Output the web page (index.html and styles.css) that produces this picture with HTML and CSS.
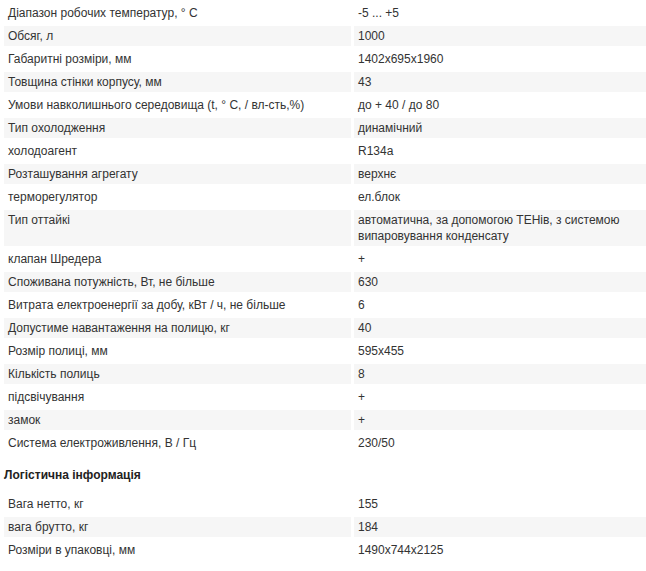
FILE: index.html
```html
<!DOCTYPE html>
<html lang="uk">
<head>
<meta charset="utf-8">
<link rel="stylesheet" href="styles.css">
</head>
<body>
<div class="specs">
<table class="spec-table">
<colgroup><col class="c-name"><col class="c-val"></colgroup>
<tbody>
<tr><td>Діапазон робочих температур, ° C</td><td>-5 ... +5</td></tr>
<tr><td>Обсяг, л</td><td>1000</td></tr>
<tr><td>Габаритні розміри, мм</td><td>1402x695x1960</td></tr>
<tr><td>Товщина стінки корпусу, мм</td><td>43</td></tr>
<tr><td>Умови навколишнього середовища (t, ° C, / вл-сть,%)</td><td>до + 40 / до 80</td></tr>
<tr><td>Тип охолодження</td><td>динамічний</td></tr>
<tr><td>холодоагент</td><td>R134a</td></tr>
<tr><td>Розташування агрегату</td><td>верхнє</td></tr>
<tr><td>терморегулятор</td><td>ел.блок</td></tr>
<tr><td>Тип оттайкі</td><td>автоматична, за допомогою ТЕНів, з системою випаровування конденсату</td></tr>
<tr><td>клапан Шредера</td><td>+</td></tr>
<tr><td>Споживана потужність, Вт, не більше</td><td>630</td></tr>
<tr><td>Витрата електроенергії за добу, кВт / ч, не більше</td><td>6</td></tr>
<tr><td>Допустиме навантаження на полицю, кг</td><td>40</td></tr>
<tr><td>Розмір полиці, мм</td><td>595x455</td></tr>
<tr><td>Кількість полиць</td><td>8</td></tr>
<tr><td>підсвічування</td><td>+</td></tr>
<tr><td>замок</td><td>+</td></tr>
<tr><td>Система електроживлення, В / Гц</td><td>230/50</td></tr>
</tbody>
</table>
<h3 class="spec-heading">Логістична інформація</h3>
<table class="spec-table">
<colgroup><col class="c-name"><col class="c-val"></colgroup>
<tbody>
<tr><td>Вага нетто, кг</td><td>155</td></tr>
<tr><td>вага брутто, кг</td><td>184</td></tr>
<tr><td>Розміри в упаковці, мм</td><td>1490x744x2125</td></tr>
</tbody>
</table>
</div>
</body>
</html>
```
FILE: styles.css
```css
html, body {
  margin: 0;
  padding: 0;
  background: #fff;
  overflow: hidden;
}
body {
  font-family: "Liberation Sans", Arial, sans-serif;
  font-size: 12px;
  line-height: 16px;
  color: #333;
}
.specs {
  padding-left: 1px;
  width: 660px;
}
.spec-table {
  border-collapse: separate;
  border-spacing: 3px;
  table-layout: fixed;
  width: 648px;
}
.c-name { width: 347px; }
.c-val { width: 292px; }
.spec-table td {
  padding: 2px 4px;
  vertical-align: top;
  text-align: left;
}
.spec-table tr:nth-child(even) td {
  background: #f6f6f6;
}
.spec-heading {
  margin: 11px 0 8px 3px;
  font-size: 12px;
  line-height: 16px;
  font-weight: bold;
  color: #222;
}
```
